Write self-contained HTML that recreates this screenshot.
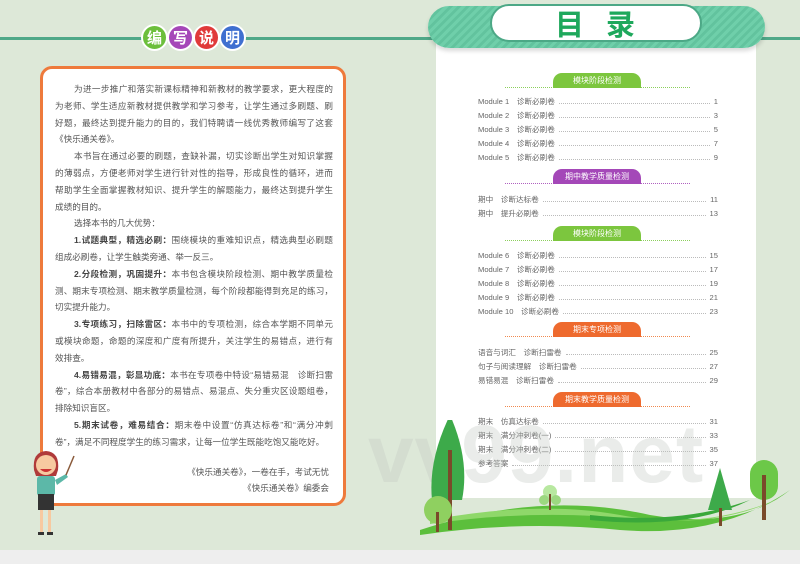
<!DOCTYPE html>
<html><head><meta charset="utf-8"><style>
*{margin:0;padding:0;box-sizing:border-box}
body{width:800px;height:564px;background:#dde8d8;position:relative;overflow:hidden;font-family:"Liberation Sans","Noto Sans CJK SC",sans-serif}
.abs{position:absolute}
.hl{position:absolute;height:3px;background:#4fa888;top:37px}
.badge{position:absolute;top:24px;width:27px;height:27px;border-radius:50%;border:2px solid #fff;color:#fff;font-size:15px;font-weight:bold;text-align:center;line-height:23px;font-family:"WenQuanYi Zen Hei","Noto Sans CJK SC",sans-serif}
#box{position:absolute;left:40px;top:66px;width:306px;height:440px;background:#fff;border:3px solid #ee7a3c;border-radius:12px}
#txt{position:absolute;left:55px;top:81px;width:278px;font-size:8.6px;line-height:16.8px;color:#555}
#txt div{white-space:nowrap;text-align:justify;text-align-last:justify}
#txt div.l{text-align-last:left}
#txt div.i{padding-left:19px}
#txt div.r{text-align-last:right;padding-right:4px}
b{color:#444}
#panel{position:absolute;left:436px;top:20px;width:320px;height:478px;background:#fff}
.hdr{position:absolute;left:505px;width:185px;height:14px;border-bottom:1.5px dotted}
.pill{position:absolute;left:48px;top:-1px;width:88px;height:15px;border-radius:9px 9px 0 0;color:#fff;font-size:8px;text-align:center;line-height:15px}
.row{position:absolute;left:478px;width:240px;font-size:7.6px;color:#666;display:flex;align-items:center;height:11px}
.row .d{flex:1;border-bottom:1px dotted #bbb;margin:0 4px;height:5px}
</style></head><body>
<div class="hl" style="left:0;width:142px"></div>
<div class="hl" style="left:245px;width:190px"></div>
<div class="hl" style="left:760px;width:40px"></div>
<div class="badge" style="left:141px;background:#6cbf3c">编</div>
<div class="badge" style="left:167px;background:#a547b8">写</div>
<div class="badge" style="left:193px;background:#e03a3a">说</div>
<div class="badge" style="left:219px;background:#3f6fd0">明</div>
<div id="box"></div>
<div id="txt">
<div class="i">为进一步推广和落实新课标精神和新教材的教学要求，更大程度的</div>
<div>为老师、学生适应新教材提供教学和学习参考，让学生通过多刷题、刷</div>
<div>好题，最终达到提升能力的目的，我们特聘请一线优秀教师编写了这套</div>
<div class="l">《快乐通关卷》。</div>
<div class="i">本书旨在通过必要的刷题，查缺补漏，切实诊断出学生对知识掌握</div>
<div>的薄弱点，方便老师对学生进行针对性的指导，形成良性的循环，进而</div>
<div>帮助学生全面掌握教材知识、提升学生的解题能力，最终达到提升学生</div>
<div class="l">成绩的目的。</div>
<div class="i l">选择本书的几大优势：</div>
<div class="i"><b>1.试题典型，精选必刷：</b>围绕模块的重难知识点，精选典型必刷题</div>
<div class="l">组成必刷卷，让学生触类旁通、举一反三。</div>
<div class="i"><b>2.分段检测，巩固提升：</b>本书包含模块阶段检测、期中教学质量检</div>
<div>测、期末专项检测、期末教学质量检测，每个阶段都能得到充足的练习，</div>
<div class="l">切实提升能力。</div>
<div class="i"><b>3.专项练习，扫除雷区：</b>本书中的专项检测，综合本学期不同单元</div>
<div>或模块命题，命题的深度和广度有所提升，关注学生的易错点，进行有</div>
<div class="l">效排查。</div>
<div class="i"><b>4.易错易混，彰显功底：</b>本书在专项卷中特设“易错易混　诊断扫雷</div>
<div>卷”，综合本册教材中各部分的易错点、易混点、失分重灾区设题组卷，</div>
<div class="l">排除知识盲区。</div>
<div class="i"><b>5.期末试卷，难易结合：</b>期末卷中设置“仿真达标卷”和“满分冲刺</div>
<div class="l">卷”，满足不同程度学生的练习需求，让每一位学生既能吃饱又能吃好。</div>
<div style="height:13px"></div>
<div class="r">《快乐通关卷》，一卷在手，考试无忧</div>
<div class="r">《快乐通关卷》编委会</div>
</div>
<svg class="abs" style="left:26px;top:448px" width="50" height="90" viewBox="0 0 50 90">
<path d="M8 22 Q6 4 20 3 Q34 4 32 22 L30 28 L10 28Z" fill="#b03a3a"/>
<circle cx="20" cy="17" r="10" fill="#f7c9a0"/>
<path d="M14 21 Q20 27 26 21Z" fill="#c33"/>
<rect x="11" y="28" width="18" height="20" rx="3" fill="#5cb8a8"/>
<path d="M29 32 L40 26 L42 29 L31 37Z" fill="#5cb8a8"/>
<line x1="40" y1="27" x2="48" y2="8" stroke="#8a5a3a" stroke-width="1.5"/>
<rect x="12" y="46" width="16" height="16" fill="#333"/>
<rect x="14" y="62" width="3" height="22" fill="#f7c9a0"/><rect x="22" y="62" width="3" height="22" fill="#f7c9a0"/>
<rect x="12" y="84" width="6" height="3" fill="#333"/><rect x="21" y="84" width="6" height="3" fill="#333"/>
</svg>
<div id="panel"></div>
<div class="abs" style="left:428px;top:6px;width:337px;height:42px;border-radius:21px;background:repeating-linear-gradient(135deg,#6fcfaa 0 3px,#62c39e 3px 6px);box-shadow:0 3px 4px rgba(0,0,0,.15)"></div>
<div class="abs" style="left:490px;top:4px;width:212px;height:38px;border-radius:19px;background:#fff;border:2px solid #4ca886;color:#1ea85c;font-size:29px;font-weight:bold;text-align:center;line-height:34px;letter-spacing:22px;padding-left:20px;font-family:'Noto Sans CJK SC',sans-serif">目录</div>
<div class="hdr" style="top:74px;border-color:#8ccf5c"><div class="pill" style="background:#7cc63e">模块阶段检测</div></div>
<div class="hdr" style="top:170px;border-color:#b060c0"><div class="pill" style="background:#a448b8">期中教学质量检测</div></div>
<div class="hdr" style="top:227px;border-color:#8ccf5c"><div class="pill" style="background:#7cc63e">模块阶段检测</div></div>
<div class="hdr" style="top:323px;border-color:#f08a50"><div class="pill" style="background:#ee6a2e">期末专项检测</div></div>
<div class="hdr" style="top:393px;border-color:#f08a50"><div class="pill" style="background:#ee6a2e">期末教学质量检测</div></div>
<div class="row" style="top:96px">Module 1　诊断必刷卷<span class="d"></span>1</div>
<div class="row" style="top:110px">Module 2　诊断必刷卷<span class="d"></span>3</div>
<div class="row" style="top:124px">Module 3　诊断必刷卷<span class="d"></span>5</div>
<div class="row" style="top:138px">Module 4　诊断必刷卷<span class="d"></span>7</div>
<div class="row" style="top:152px">Module 5　诊断必刷卷<span class="d"></span>9</div>
<div class="row" style="top:194px">期中　诊断达标卷<span class="d"></span>11</div>
<div class="row" style="top:208px">期中　提升必刷卷<span class="d"></span>13</div>
<div class="row" style="top:250px">Module 6　诊断必刷卷<span class="d"></span>15</div>
<div class="row" style="top:264px">Module 7　诊断必刷卷<span class="d"></span>17</div>
<div class="row" style="top:278px">Module 8　诊断必刷卷<span class="d"></span>19</div>
<div class="row" style="top:292px">Module 9　诊断必刷卷<span class="d"></span>21</div>
<div class="row" style="top:306px">Module 10　诊断必刷卷<span class="d"></span>23</div>
<div class="row" style="top:347px">语音与词汇　诊断扫雷卷<span class="d"></span>25</div>
<div class="row" style="top:361px">句子与阅读理解　诊断扫雷卷<span class="d"></span>27</div>
<div class="row" style="top:375px">易错易混　诊断扫雷卷<span class="d"></span>29</div>
<div class="row" style="top:416px">期末　仿真达标卷<span class="d"></span>31</div>
<div class="row" style="top:430px">期末　满分冲刺卷(一)<span class="d"></span>33</div>
<div class="row" style="top:444px">期末　满分冲刺卷(二)<span class="d"></span>35</div>
<div class="row" style="top:458px">参考答案<span class="d"></span>37</div>
<div class="abs" style="left:368px;top:408px;font-size:82px;font-weight:bold;color:rgba(195,200,195,.35);letter-spacing:1px">vv99.net</div>
<svg class="abs" style="left:420px;top:420px" width="380" height="120" viewBox="0 0 380 120">
<path d="M0 110 Q120 70 230 95 Q320 110 370 70 Q300 118 200 110 Q100 100 0 115Z" fill="#5cbf3c"/>
<path d="M10 100 Q120 80 200 95 Q290 112 360 78 Q300 105 220 100 Q120 88 10 104Z" fill="#8fd86a"/>
<path d="M170 95 Q260 105 330 80 Q270 110 170 100Z" fill="#3aa83a"/>
<path d="M30 -5 Q50 40 42 80 L12 80 Q8 40 30 -5Z" fill="#3daa4a"/>
<rect x="28" y="30" width="4" height="80" fill="#7a4a2a"/>
<circle cx="18" cy="90" r="14" fill="#8fd060"/><rect x="16" y="92" width="3" height="20" fill="#7a4a2a"/>
<circle cx="130" cy="72" r="7" fill="#b8e8a0"/><circle cx="124" cy="80" r="5" fill="#9cd880"/><circle cx="136" cy="80" r="5" fill="#9cd880"/><rect x="129" y="74" width="2" height="16" fill="#7a4a2a"/>
<path d="M300 48 L312 90 L288 90Z" fill="#3daa4a"/><rect x="299" y="88" width="3" height="18" fill="#7a4a2a"/>
<rect x="330" y="40" width="28" height="40" rx="14" fill="#6cc848"/><rect x="342" y="55" width="4" height="45" fill="#7a4a2a"/>
</svg>
<div class="abs" style="left:0;top:550px;width:800px;height:14px;background:#eeeeee"></div>
</body></html>
